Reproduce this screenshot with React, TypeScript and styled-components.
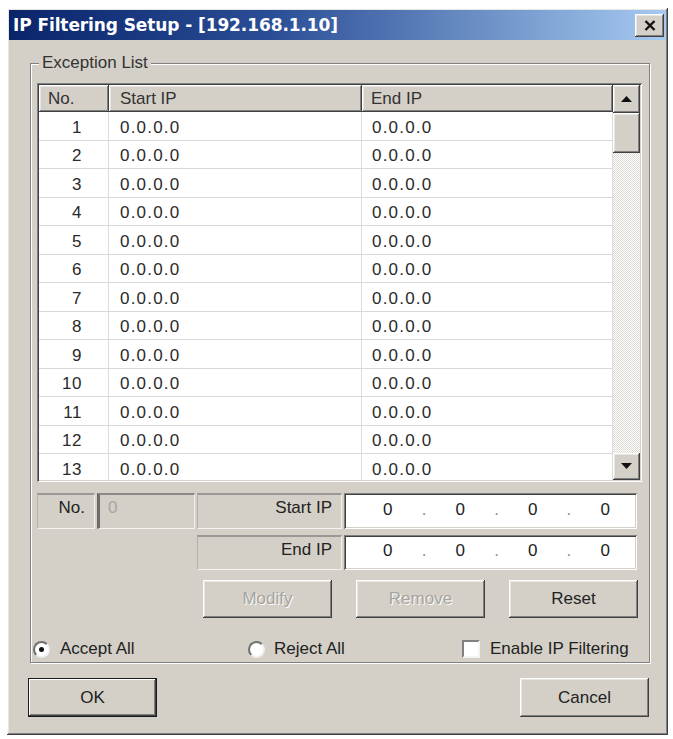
import React from "react";
import styled, { createGlobalStyle, css } from "styled-components";

const GlobalStyle = createGlobalStyle`
  html, body { margin: 0; padding: 0; background: #ffffff; }
  body { font-family: "Liberation Sans", Arial, sans-serif; font-size: 17px; color: #222; }
  * { box-sizing: border-box; }
`;

const face = "#d4d0c8";

const raised = css`
  background: ${face};
  box-shadow: inset -1px -1px #404040, inset 1px 1px #ffffff, inset -2px -2px #808080, inset 2px 2px #e8e6e1;
`;

const sunken = css`
  box-shadow: inset 1px 1px #808080, inset -1px -1px #ffffff, inset 2px 2px #404040, inset -2px -2px #d4d0c8;
`;

const Window = styled.div`
  margin: 8px 0 0 7px;
  width: 661px;
  height: 727px;
  padding: 2px;
  display: flex;
  flex-direction: column;
  ${raised};
  background: ${face};
`;

const TitleBar = styled.div`
  height: 30px;
  display: flex;
  align-items: center;
  justify-content: space-between;
  padding: 0 2px 0 4px;
  background: linear-gradient(to right, #0a246a 0%, #2a4e96 40%, #a6caf0 100%);
`;

const Title = styled.span`
  font-family: "DejaVu Sans", Verdana, sans-serif;
  font-weight: bold;
  font-size: 17px;
  color: #ffffff;
  letter-spacing: -0.1px;
`;

const CloseButton = styled.div`
  width: 29px;
  height: 23px;
  display: flex;
  align-items: center;
  justify-content: center;
  ${raised};
`;

const Group = styled.div`
  position: relative;
  margin: 23px 16px 0 21px;
  height: 600px;
  padding: 19px 7px 0 6px;
  border: 1px solid #808080;
  box-shadow: inset 1px 1px #ffffff, 1px 1px #ffffff;
  display: flex;
  flex-direction: column;
`;

const Legend = styled.span`
  position: absolute;
  top: -11px;
  left: 8px;
  padding: 0 3px;
  background: ${face};
  line-height: 20px;
  color: #333;
`;

const ListView = styled.div`
  height: 399px;
  padding: 2px;
  display: flex;
  background: #ffffff;
  ${sunken};
`;

const Columns = styled.div`
  flex: 1;
  display: flex;
  flex-direction: column;
  overflow: hidden;
`;

const HeaderRow = styled.div`
  display: grid;
  grid-template-columns: 70px 253px 1fr;
  height: 27px;
  flex: none;
`;

const HeaderCell = styled.div<{ $pad: number }>`
  ${raised};
  padding-left: ${(p) => p.$pad}px;
  display: flex;
  align-items: center;
  color: #333;
`;

const Body = styled.div`
  flex: 1;
  overflow: hidden;
`;

const Row = styled.div`
  display: grid;
  grid-template-columns: 70px 253px 1fr;
  height: 28.5px;
  border-bottom: 1px solid #d9d9d9;
`;

const Cell = styled.div<{ $num?: boolean; $pad?: number }>`
  display: flex;
  align-items: center;
  border-right: 1px solid #dcdcdc;
  color: #2a2a2a;
  letter-spacing: ${(p) => (p.$num ? "0.5px" : "1.2px")};
  justify-content: ${(p) => (p.$num ? "flex-end" : "flex-start")};
  padding: ${(p) => (p.$num ? "4px 26px 0 0" : `4px 0 0 ${p.$pad ?? 11}px`)};
`;

const ScrollBar = styled.div`
  width: 27px;
  display: flex;
  flex-direction: column;
  background-color: #ecebe6;
  background-image: repeating-conic-gradient(#ffffff 0 25%, #dedbd4 0 50%);
  background-size: 2px 2px;
`;

const ScrollButton = styled.div<{ $h: number }>`
  height: ${(p) => p.$h}px;
  display: flex;
  align-items: center;
  justify-content: center;
  ${raised};
`;

const Track = styled.div`
  flex: 1;
`;

const Thumb = styled.div`
  height: 40px;
  ${raised};
`;

const EditGrid = styled.div`
  margin-top: 11px;
  display: grid;
  grid-template-columns: 58px 98px 145px 293px;
  grid-template-rows: 36px 35px;
  column-gap: 2px;
  row-gap: 6px;
`;

const LabelBox = styled.div<{ $col: number; $row: number }>`
  grid-column: ${(p) => p.$col};
  grid-row: ${(p) => p.$row};
  display: flex;
  align-items: center;
  justify-content: flex-end;
  padding: 0 9px 7px 0;
  border-top: 2px solid #9a9894;
  border-left: 1px solid #b4b1aa;
  border-bottom: 1px solid #f4f3f0;
  border-right: 1px solid #f4f3f0;
  color: #222;
`;

const DisabledInput = styled.div`
  grid-column: 2;
  grid-row: 1;
  display: flex;
  align-items: center;
  padding: 0 0 7px 8px;
  color: #a8a6a0;
  background: ${face};
  border-top: 2px solid #8a8884;
  border-left: 3px solid #6e6c68;
  border-bottom: 1px solid #f4f3f0;
  border-right: 1px solid #f4f3f0;
`;

const IpInput = styled.div<{ $row: number }>`
  grid-column: 4;
  grid-row: ${(p) => p.$row};
  display: flex;
  align-items: center;
  padding: 0 0 3px 12px;
  background: #ffffff;
  ${sunken};
`;

const Octet = styled.span`
  width: 64px;
  text-align: center;
  color: #222;
`;

const Dot = styled.span`
  width: 9px;
  text-align: center;
  color: #8c8c8c;
`;

const ActionRow = styled.div`
  margin-top: 10px;
  margin-right: 4px;
  display: flex;
  justify-content: flex-end;
  gap: 24px;
`;

const Button = styled.div<{ $disabled?: boolean; $default?: boolean }>`
  width: 129px;
  height: 38px;
  display: flex;
  align-items: center;
  justify-content: center;
  ${raised};
  color: ${(p) => (p.$disabled ? "#a6a39d" : "#222")};
  text-shadow: ${(p) => (p.$disabled ? "1px 1px 0 #ffffff" : "none")};
  ${(p) =>
    p.$default &&
    css`
      border: 1px solid #1a1a1a;
      box-shadow: inset -1px -1px #404040, inset 1px 1px #ffffff, inset -2px -2px #808080;
    `}
`;

const OptionRow = styled.div`
  margin: 21px 0 0 -4px;
  display: grid;
  grid-template-columns: 215px 214px 1fr;
  align-items: center;
  height: 20px;
`;

const Option = styled.label<{ $gap: number }>`
  display: flex;
  align-items: center;
  gap: ${(p) => p.$gap}px;
  color: #222;
`;

const Radio = styled.span<{ $checked?: boolean }>`
  width: 17px;
  height: 17px;
  border-radius: 50%;
  background: #ffffff;
  border: 2px solid;
  border-color: #707070 #f0f0f0 #f0f0f0 #707070;
  display: flex;
  align-items: center;
  justify-content: center;
  &::after {
    content: "";
    width: 5px;
    height: 5px;
    border-radius: 50%;
    background: ${(p) => (p.$checked ? "#111" : "transparent")};
  }
`;

const Check = styled.span`
  width: 18px;
  height: 18px;
  background: #ffffff;
  border: 2px solid;
  border-color: #808080 #f4f4f4 #f4f4f4 #808080;
`;

const Footer = styled.div`
  margin-top: 15px;
  padding: 0 17px 0 19px;
  display: flex;
  justify-content: space-between;
`;

const FooterButton = styled(Button)`
  height: 39px;
`;

const Triangle = ({ up }: { up?: boolean }) => (
  <svg width="11" height="7" viewBox="0 0 11 7">
    <polygon points={up ? "5.5,0 11,6 0,6" : "0,0 11,0 5.5,6"} fill="#111" />
  </svg>
);

const IpValue = () => (
  <>
    <Octet>0</Octet>
    <Dot>.</Dot>
    <Octet>0</Octet>
    <Dot>.</Dot>
    <Octet>0</Octet>
    <Dot>.</Dot>
    <Octet>0</Octet>
  </>
);

const rows = Array.from({ length: 13 }, (_, i) => i + 1);

export default function App() {
  return (
    <>
      <GlobalStyle />
      <Window>
        <TitleBar>
          <Title>IP Filtering Setup - [192.168.1.10]</Title>
          <CloseButton>
            <svg width="12" height="11" viewBox="0 0 12 11">
              <path d="M1.5 1 L10.5 10 M10.5 1 L1.5 10" stroke="#111" strokeWidth="2.4" />
            </svg>
          </CloseButton>
        </TitleBar>
        <Group>
          <Legend>Exception List</Legend>
          <ListView>
            <Columns>
              <HeaderRow>
                <HeaderCell $pad={9}>No.</HeaderCell>
                <HeaderCell $pad={11}>Start IP</HeaderCell>
                <HeaderCell $pad={9}>End IP</HeaderCell>
              </HeaderRow>
              <Body>
                {rows.map((n) => (
                  <Row key={n}>
                    <Cell $num>{n}</Cell>
                    <Cell $pad={11}>0.0.0.0</Cell>
                    <Cell $pad={10}>0.0.0.0</Cell>
                  </Row>
                ))}
              </Body>
            </Columns>
            <ScrollBar>
              <ScrollButton $h={28}>
                <Triangle up />
              </ScrollButton>
              <Thumb />
              <Track />
              <ScrollButton $h={27}>
                <Triangle />
              </ScrollButton>
            </ScrollBar>
          </ListView>
          <EditGrid>
            <LabelBox $col={1} $row={1}>No.</LabelBox>
            <DisabledInput>0</DisabledInput>
            <LabelBox $col={3} $row={1}>Start IP</LabelBox>
            <IpInput $row={1}>
              <IpValue />
            </IpInput>
            <LabelBox $col={3} $row={2}>End IP</LabelBox>
            <IpInput $row={2}>
              <IpValue />
            </IpInput>
          </EditGrid>
          <ActionRow>
            <Button $disabled>Modify</Button>
            <Button $disabled>Remove</Button>
            <Button>Reset</Button>
          </ActionRow>
          <OptionRow>
            <Option $gap={10}>
              <Radio $checked />
              Accept All
            </Option>
            <Option $gap={9}>
              <Radio />
              Reject All
            </Option>
            <Option $gap={10}>
              <Check />
              Enable IP Filtering
            </Option>
          </OptionRow>
        </Group>
        <Footer>
          <FooterButton $default>OK</FooterButton>
          <FooterButton>Cancel</FooterButton>
        </Footer>
      </Window>
    </>
  );
}
